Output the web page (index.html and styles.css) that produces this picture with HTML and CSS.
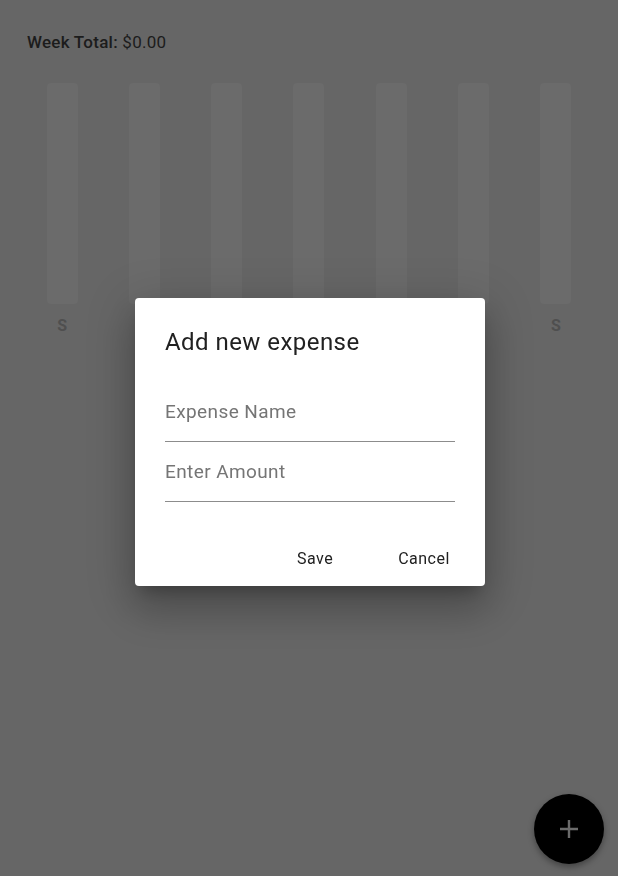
FILE: index.html
```html
<!DOCTYPE html>
<html lang="en">
<head>
    <meta charset="UTF-8">
    <meta name="viewport" content="width=device-width, initial-scale=1.0">
    <title>Expenses</title>
    <link rel="stylesheet" href="styles.css">
</head>
<body>
    <div id="wrapper">
        <div class="week-total">
            <span class="week-label">Week Total:</span> <span>$0.00</span>
        </div>
        <div class="chart">
            <div class="day"><div class="bar"></div><span class="day-label">S</span></div>
            <div class="day"><div class="bar"></div><span class="day-label">M</span></div>
            <div class="day"><div class="bar"></div><span class="day-label">T</span></div>
            <div class="day"><div class="bar"></div><span class="day-label">W</span></div>
            <div class="day"><div class="bar"></div><span class="day-label">T</span></div>
            <div class="day"><div class="bar"></div><span class="day-label">F</span></div>
            <div class="day"><div class="bar"></div><span class="day-label">S</span></div>
        </div>
    </div>

    <!-- 추가 버튼 -->
    <button class="fab">
        <svg width="18" height="18" viewBox="0 0 18 18">
            <path d="M9 0v18M0 9h18" stroke="#6b6b6b" stroke-width="2.4"/>
        </svg>
    </button>

    <!-- 지출 추가 다이얼로그 -->
    <div class="overlay">
        <div class="dialog">
            <h2 class="dialog-title">Add new expense</h2>
            <form name="form1" class="dialog-content">
                <input type="text" name="title" placeholder="Expense Name">
                <input type="text" name="amount" placeholder="Enter Amount">
            </form>
            <div class="dialog-actions">
                <button class="text-btn">Save</button>
                <button class="text-btn">Cancel</button>
            </div>
        </div>
    </div>
</body>
</html>
```

FILE: styles.css
```css
html, body{
    height: 100%;
}
body{
    margin: 0;
    background-color: #666666;
    font-family: Roboto, "Liberation Sans", sans-serif;
    overflow: hidden;
}
#wrapper{
    padding: 0 21px;
}
.week-total{
    padding: 30px 6px 0;
    font-size: 17px;
    letter-spacing: 0.25px;
    line-height: 24px;
    color: #1c1c1c;
}
.week-label{
    font-weight: 500;
}
.chart{
    display: flex;
    margin-top: 29px;
}
.day{
    flex: 1;
    display: flex;
    flex-direction: column;
    align-items: center;
}
.bar{
    width: 31px;
    height: 221px;
    border-radius: 4px;
    background-color: #6b6b6b;
}
.day-label{
    margin-top: 12px;
    font-size: 16px;
    font-weight: 700;
    color: #4f4f4f;
}
.fab{
    position: fixed;
    right: 14px;
    bottom: 12px;
    width: 70px;
    height: 70px;
    border: none;
    border-radius: 50%;
    background-color: #000000;
    display: flex;
    align-items: center;
    justify-content: center;
    box-shadow: 0 3px 6px rgba(0,0,0,0.35);
}
.overlay{
    position: fixed;
    inset: 0;
    display: flex;
    align-items: center;
    justify-content: center;
    padding: 8px 0 0 2px;
    box-sizing: border-box;
}
.dialog{
    width: 350px;
    height: 288px;
    box-sizing: border-box;
    background-color: #ffffff;
    border-radius: 4px;
    box-shadow: 0 11px 15px -7px rgba(0,0,0,0.25), 0 24px 38px 3px rgba(0,0,0,0.16), 0 9px 46px 8px rgba(0,0,0,0.14);
    display: flex;
    flex-direction: column;
}
.dialog-title{
    margin: 0;
    padding: 30px 30px 0;
    font-size: 24px;
    font-weight: 400;
    letter-spacing: 0.45px;
    line-height: 28px;
    color: #212121;
}
.dialog-content{
    display: flex;
    flex-direction: column;
    padding: 26px 30px 0;
}
.dialog-content input{
    padding: 19px 0;
    font-family: inherit;
    font-size: 19px;
    letter-spacing: 0.4px;
    line-height: 21px;
    border: none;
    border-bottom: 1px solid #8c8c8c;
    outline: none;
    color: #212121;
}
.dialog-content input::placeholder{
    color: #757575;
}
.dialog-actions{
    display: flex;
    justify-content: flex-end;
    gap: 21px;
    padding: 38px 17px 0 0;
}
.text-btn{
    min-width: 88px;
    height: 36px;
    border: none;
    background: none;
    font-family: inherit;
    font-size: 16px;
    letter-spacing: 0.5px;
    color: #212121;
    padding: 0;
}
```
